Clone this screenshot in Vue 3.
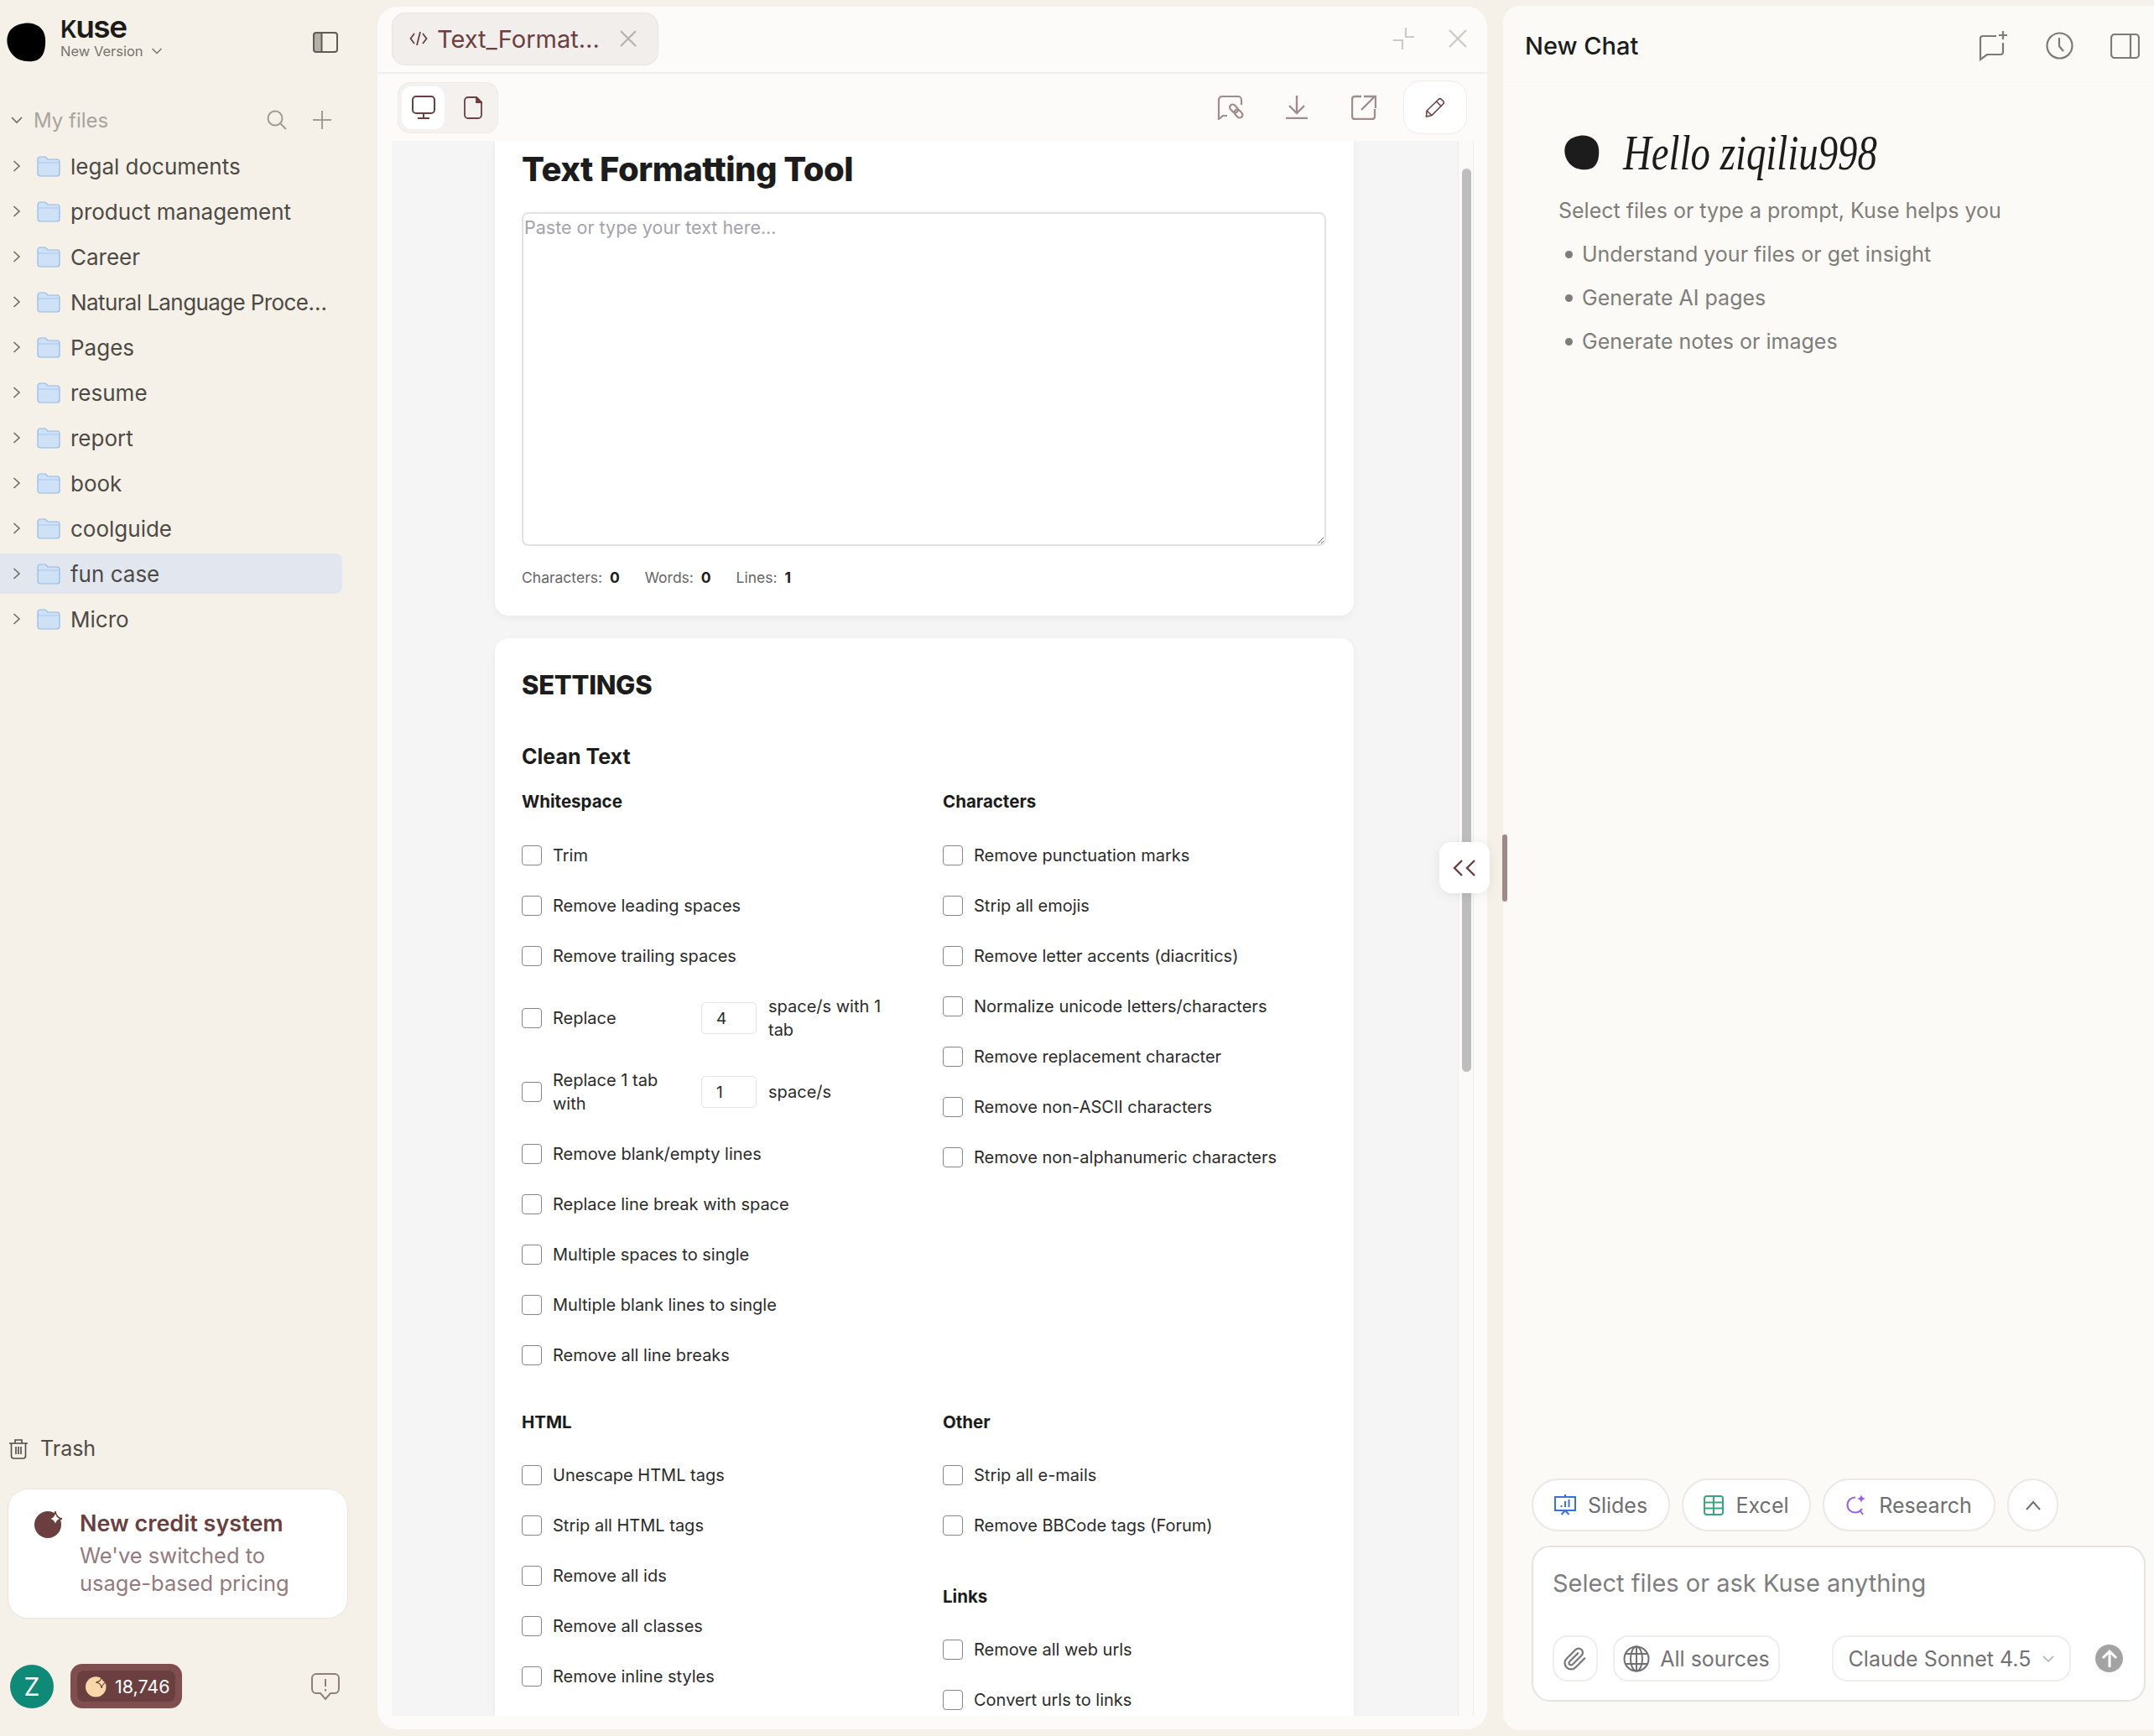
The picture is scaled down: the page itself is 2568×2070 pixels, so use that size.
<template>
  <div class="app">
    <!-- left sidebar -->
    <aside class="sidebar">
      <div class="brand">
        <svg class="blob" width="47" height="47" viewBox="0 0 47 47"><path d="M20 1C31-1 45 4 46 19c1 14-3 26-15 27-9 1-19-1-25-9C0 29-1 20 2 13 5 6 12 2 20 1z" fill="#000" /></svg>
        <div class="brand-text">
          <div class="wordmark"><span class="wordmark-k">K</span>use</div>
          <div class="version">
            New Version
            <svg width="14" height="10" viewBox="0 0 14 10" fill="none" stroke="#77736c" stroke-width="1.5"><path d="M1.500 2l5.500 5.500L12.500 2" /></svg>
          </div>
        </div>
        <svg class="brand-toggle" width="30" height="25" viewBox="0 0 30 25" fill="none">
          <rect x="1" y="1" width="10" height="23" rx="3" fill="#b3b0a8" />
          <rect x="1" y="1" width="28" height="23" rx="3" stroke="#5e5b55" stroke-width="2" />
          <path d="M10.500 1v23" stroke="#5e5b55" stroke-width="2" />
        </svg>
      </div>

      <div class="files-head">
        <svg width="14" height="10" viewBox="0 0 14 10" fill="none" stroke="#6e6a63" stroke-width="1.600"><path d="M1 2l6 6 6-6" /></svg>
        <span class="files-title">My files</span>
        <svg class="files-search" width="24" height="24" viewBox="0 0 24 24" fill="none" stroke="#a09c94" stroke-width="2"><circle cx="10" cy="10" r="8.500" /><path d="M16 16l7 7" /></svg>
        <svg class="files-add" width="24" height="24" viewBox="0 0 24 24" fill="none" stroke="#a09c94" stroke-width="2"><path d="M12 1v22M1 12h22" /></svg>
      </div>

      <div class="tree">
        <div v-for="folder in folders" :key="folder" class="tree-row" :class="{ selected: folder === 'fun case' }">
          <svg width="10" height="16" viewBox="0 0 10 16" fill="none" stroke="#6e6a63" stroke-width="1.600"><path d="M1.500 2l6.500 6-6.500 6" /></svg>
          <svg width="28" height="25" viewBox="0 0 28 25">
            <path d="M1 4a3 3 0 0 1 3-3h6l3 3h11a3 3 0 0 1 3 3v14a3 3 0 0 1-3 3H4a3 3 0 0 1-3-3z" fill="#cfe1f7" stroke="#93b9e6" stroke-width="1.200" />
            <path d="M1 8h26" stroke="#a9c8ec" stroke-width="1" />
          </svg>
          <span class="tree-name" :class="{ clipped: folder.endsWith('…') }">{{ folder }}</span>
        </div>
      </div>

      <div class="trash">
        <svg width="24" height="25" viewBox="0 0 24 25" fill="none" stroke="#4f4b45" stroke-width="1.600"><path d="M1 6h22M8 6V2h8v4M3.500 6v15a3 3 0 0 0 3 3h11a3 3 0 0 0 3-3V6M9 10v9M12 10v9M15 10v9" /></svg>
        Trash
      </div>

      <div class="credit-card">
        <svg class="credit-icon" width="34" height="33" viewBox="0 0 34 33">
          <circle cx="16" cy="17" r="16" fill="#6b3f3f" />
          <path d="M25 1c1 6 3 8 8 9-5 1-7 3-8 9-1-6-3-8-9-9 6-1 8-3 9-9z" fill="#fff" stroke="#6b3f3f" stroke-width="1.500" />
        </svg>
        <div>
          <div class="credit-title">New credit system</div>
          <div class="credit-sub">We've switched to<br />usage-based pricing</div>
        </div>
      </div>

      <div class="account">
        <div class="avatar">Z</div>
        <div class="credits">
          <div class="credits-inner">
            <svg width="26" height="26" viewBox="0 0 34 33">
              <circle cx="16" cy="17" r="16" fill="#f8d7a8" />
              <path d="M25 1c1 6 3 8 8 9-5 1-7 3-8 9-1-6-3-8-9-9 6-1 8-3 9-9z" fill="#f8d7a8" stroke="#6b3f3f" stroke-width="1.500" />
            </svg>
            18,746
          </div>
        </div>
        <svg class="feedback" width="36" height="34" viewBox="0 0 36 34" fill="none" stroke="#8f7f7a" stroke-width="2">
          <path d="M7 2h22a5 5 0 0 1 5 5v13a5 5 0 0 1-5 5h-5l-6 7-6-7H7a5 5 0 0 1-5-5V7a5 5 0 0 1 5-5z" />
          <path d="M18 8v9M18 20v2.500" />
        </svg>
      </div>
    </aside>

    <!-- file preview -->
    <main class="preview">
      <div class="tabbar">
        <div class="tab">
          <svg width="22" height="20" viewBox="0 0 22 20" fill="none" stroke="#6b3f3f" stroke-width="1.800"><path d="M6 4L1.500 10 6 16M16 4l4.500 6L16 16M13 2L9 18" /></svg>
          <span class="tab-name">Text_Format…</span>
          <svg width="22" height="22" viewBox="0 0 22 22" fill="none" stroke="#b8b0ac" stroke-width="2.200"><path d="M2 2l18 18M20 2L2 20" /></svg>
        </div>
        <svg class="tab-min" width="26" height="26" viewBox="0 0 26 26" fill="none" stroke="#cfcac6" stroke-width="2.200"><path d="M15 0v11h10M0 15h11v11" /></svg>
        <svg class="tab-close" width="22" height="22" viewBox="0 0 22 22" fill="none" stroke="#cfcac6" stroke-width="2.400"><path d="M1 1l20 20M21 1L1 21" /></svg>
      </div>

      <div class="toolbar">
        <div class="view-switch">
          <div class="view-btn active">
            <svg width="28" height="28" viewBox="0 0 28 28" fill="none" stroke="#6b3f3f" stroke-width="2"><rect x="1" y="1" width="26" height="20" rx="4" /><path d="M14 21v6M7 27h14" /></svg>
          </div>
          <div class="view-btn">
            <svg width="22" height="27" viewBox="0 0 22 27" fill="none" stroke="#6b3f3f" stroke-width="1.800"><path d="M5 1h10l6 6v15a4 4 0 0 1-4 4H5a4 4 0 0 1-4-4V5a4 4 0 0 1 4-4z" /><path d="M15 1l6 6h-6z" fill="#6b3f3f" /></svg>
          </div>
        </div>
        <svg class="tool first" width="32" height="30" viewBox="0 0 32 30" fill="none" stroke="#a08c8c" stroke-width="2.200">
          <path d="M12 25H7l-5 4V6a4 4 0 0 1 4-4h19a4 4 0 0 1 4 4v6" />
          <rect x="14.500" y="13" width="11" height="7" rx="3.500" transform="rotate(45 20 16.500)" />
          <rect x="20" y="19" width="11" height="7" rx="3.500" transform="rotate(45 25.500 22.500)" />
        </svg>
        <svg class="tool" width="26" height="28" viewBox="0 0 26 28" fill="none" stroke="#a08c8c" stroke-width="2.400">
          <path d="M13 0v20M4 12l9 9 9-9M0 27h26" />
        </svg>
        <svg class="tool tool-share" width="30" height="30" viewBox="0 0 30 30" fill="none" stroke="#a08c8c" stroke-width="2.400">
          <path d="M12 2H4a3 3 0 0 0-3 3v21a3 3 0 0 0 3 3h21a3 3 0 0 0 3-3v-9" />
          <path d="M12 18L28 2M15 2h14v14" />
        </svg>
        <div class="edit-btn">
          <svg width="24" height="24" viewBox="0 0 24 24" fill="none" stroke="#6b3f3f" stroke-width="1.600">
            <path d="M16 2.500a2.500 2.500 0 0 1 3.500 0l2 2a2.500 2.500 0 0 1 0 3.500L8 21.500 1.500 23l.5-7zM13.500 5l5.500 5.500M2 16l6 5.500" />
          </svg>
        </div>
      </div>

      <div class="preview-body">
        <div class="scroll-area">
          <section class="card first-card">
            <h1 class="page-title">Text Formatting Tool</h1>
            <textarea class="input-box" placeholder="Paste or type your text here..."></textarea>
            <div class="stats">
              <span v-for="stat in stats" :key="stat.label">{{ stat.label }}: <b>{{ stat.value }}</b></span>
            </div>
          </section>

          <section class="card settings-card">
            <h2 class="settings-title">SETTINGS</h2>
            <h3 class="clean-title">Clean Text</h3>
            <div class="settings-grid">
              <div class="group">
                <h4>Whitespace</h4>
                <div class="rows">
                  <template v-for="item in whitespace" :key="item.label">
                    <label v-if="!item.value" class="opt"><input type="checkbox" /><span>{{ item.label }}</span></label>
                    <div v-else class="opt opt-input">
                      <input type="checkbox" />
                      <span class="opt-label">{{ item.label }}</span>
                      <input class="num" type="text" :value="item.value" />
                      <span class="opt-after">{{ item.after }}</span>
                    </div>
                  </template>
                </div>
              </div>
              <div class="group">
                <h4>Characters</h4>
                <div class="rows">
                  <label v-for="item in characters" :key="item" class="opt"><input type="checkbox" /><span>{{ item }}</span></label>
                </div>
              </div>
              <div class="group lower">
                <h4>HTML</h4>
                <div class="rows">
                  <label v-for="item in html" :key="item" class="opt"><input type="checkbox" /><span>{{ item }}</span></label>
                </div>
              </div>
              <div>
                <div class="group lower">
                  <h4>Other</h4>
                  <div class="rows">
                    <label v-for="item in other" :key="item" class="opt"><input type="checkbox" /><span>{{ item }}</span></label>
                  </div>
                </div>
                <div class="group lower links-group">
                  <h4>Links</h4>
                  <div class="rows">
                    <label v-for="item in links" :key="item" class="opt"><input type="checkbox" /><span>{{ item }}</span></label>
                  </div>
                </div>
              </div>
            </div>
          </section>
        </div>
        <div class="scroll-track"><div class="scroll-thumb"></div></div>
      </div>
    </main>

    <!-- chat panel -->
    <section class="chat">
      <header class="chat-head">
        <span class="chat-title">New Chat</span>
        <svg class="head-icon" width="36" height="36" viewBox="0 0 36 36" fill="none" stroke="#7d7b77" stroke-width="2.200">
          <path d="M21 6H5a3 3 0 0 0-3 3v25l8-6h16a3 3 0 0 0 3-3V14" />
          <path d="M29 0v10M24 5h10" />
        </svg>
        <svg class="head-icon" width="33" height="33" viewBox="0 0 33 33" fill="none" stroke="#7d7b77" stroke-width="2.200">
          <circle cx="16.500" cy="16.500" r="15" /><path d="M16 7v10l5 6" />
        </svg>
        <svg class="head-icon" width="35" height="30" viewBox="0 0 35 30" fill="none" stroke="#7d7b77" stroke-width="2.200">
          <rect x="1" y="1" width="33" height="28" rx="4" /><path d="M24 1v28" />
        </svg>
      </header>

      <div class="welcome">
        <div class="hello">
          <svg width="42" height="42" viewBox="0 0 47 47"><path d="M20 1C31-1 45 4 46 19c1 14-3 26-15 27-9 1-19-1-25-9C0 29-1 20 2 13 5 6 12 2 20 1z" fill="#1c1c1c" /></svg>
          <span class="hello-text">Hello ziqiliu998</span>
        </div>
        <p class="intro">Select files or type a prompt, Kuse helps you</p>
        <ul class="intro-list">
          <li v-for="line in intro" :key="line">{{ line }}</li>
        </ul>
      </div>

      <div class="chat-bottom">
        <div class="chips">
          <div class="chip chip-slides">
            <svg width="26" height="25" viewBox="0 0 26 25" fill="none" stroke="#3c6fe0" stroke-width="2">
              <path d="M13 0v3M1 3h24v16H1zM8.500 24l4.500-5 4.500 5" />
              <path d="M8.500 15v-2M13 15V8M17.500 15V6" />
            </svg>
            Slides
          </div>
          <div class="chip chip-excel">
            <svg width="24" height="24" viewBox="0 0 24 24" fill="none" stroke="#3ba57f" stroke-width="2">
              <rect x="1" y="1" width="22" height="22" rx="3" /><path d="M1 8.500h22M1 15.500h22M12 1v22" />
            </svg>
            Excel
          </div>
          <div class="chip chip-research">
            <svg width="25" height="25" viewBox="0 0 25 25" fill="none" stroke="#9a62ea" stroke-width="2">
              <path d="M11 3.500C5.500 3.500 1.500 7 1.500 12.500S5.500 21.500 11 21.500c3.500 0 6-1.500 8-4.500M16 18.500l4 5.500" />
              <path d="M18 0c.6 3 1.700 4.300 5 5-3.300.7-4.400 2-5 5-.6-3-1.700-4.300-5-5 3.300-.7 4.400-2 5-5z" fill="#9a62ea" stroke="none" />
            </svg>
            Research
          </div>
          <div class="chip chip-round">
            <svg width="18" height="12" viewBox="0 0 18 12" fill="none" stroke="#6e6e70" stroke-width="2"><path d="M1 11l8-9 8 9" /></svg>
          </div>
        </div>

        <div class="composer">
          <div class="composer-input">Select files or ask Kuse anything</div>
          <div class="composer-row">
            <div class="mini-btn attach">
              <svg width="30" height="32" viewBox="0 0 24 24" fill="none" stroke="#77777a" stroke-width="1.800"><path d="M21.440 11.050l-9.190 9.190a6 6 0 0 1-8.490-8.490l8.570-8.570A4 4 0 1 1 18 8.840l-8.590 8.570a2 2 0 0 1-2.830-2.830l8.490-8.480" /></svg>
            </div>
            <div class="mini-btn sources">
              <svg width="32" height="32" viewBox="0 0 32 32" fill="none" stroke="#6f6f72" stroke-width="2"><circle cx="16" cy="16" r="14.500" /><ellipse cx="16" cy="16" rx="7" ry="14.500" /><path d="M3 10h26M3 22h26M16 1.500v29" /></svg>
              All sources
            </div>
            <div class="mini-btn model">
              Claude Sonnet 4.5
              <svg width="14" height="10" viewBox="0 0 14 10" fill="none" stroke="#aaa" stroke-width="1.500"><path d="M1 2l6 6 6-6" /></svg>
            </div>
            <div class="send">
              <svg width="20" height="22" viewBox="0 0 20 22" fill="none" stroke="#fff" stroke-width="3"><path d="M10 21V3M2 10l8-8 8 8" /></svg>
            </div>
          </div>
        </div>
      </div>
    </section>

    <button class="collapse">
      <svg width="28" height="20" viewBox="0 0 28 20" fill="none" stroke="#6b3f3f" stroke-width="2.400"><path d="M11 1L2 10l9 9M26 1l-9 9 9 9" /></svg>
    </button>
    <div class="resize-handle"></div>
  </div>
</template>

<script setup>
const folders = [
  'legal documents',
  'product management',
  'Career',
  'Natural Language Proce…',
  'Pages',
  'resume',
  'report',
  'book',
  'coolguide',
  'fun case',
  'Micro',
];

const stats = [
  { label: 'Characters', value: 0 },
  { label: 'Words', value: 0 },
  { label: 'Lines', value: 1 },
];

const whitespace = [
  { label: 'Trim' },
  { label: 'Remove leading spaces' },
  { label: 'Remove trailing spaces' },
  { label: 'Replace', value: '4', after: 'space/s with 1 tab' },
  { label: 'Replace 1 tab with', value: '1', after: 'space/s' },
  { label: 'Remove blank/empty lines' },
  { label: 'Replace line break with space' },
  { label: 'Multiple spaces to single' },
  { label: 'Multiple blank lines to single' },
  { label: 'Remove all line breaks' },
];

const characters = [
  'Remove punctuation marks',
  'Strip all emojis',
  'Remove letter accents (diacritics)',
  'Normalize unicode letters/characters',
  'Remove replacement character',
  'Remove non-ASCII characters',
  'Remove non-alphanumeric characters',
];

const html = ['Unescape HTML tags', 'Strip all HTML tags', 'Remove all ids', 'Remove all classes', 'Remove inline styles'];
const other = ['Strip all e-mails', 'Remove BBCode tags (Forum)'];
const links = ['Remove all web urls', 'Convert urls to links'];
const intro = ['Understand your files or get insight', 'Generate AI pages', 'Generate notes or images'];
</script>

<style>
body {
  background: #f5f1e9;
}
</style>

<style scoped>
.app {
  position: relative;
  display: flex;
  width: 2568px;
  height: 2070px;
  overflow: hidden;
  background: #f5f1e9;
  font-family: Inter, "Liberation Sans", sans-serif;
  color: #1c1c1c;
}

/* sidebar */
.sidebar {
  flex: 0 0 450px;
  display: flex;
  flex-direction: column;
}

.brand {
  display: flex;
  align-items: flex-start;
  height: 118px;
  padding: 18px 0 0 8px;
  box-sizing: border-box;
}

.blob {
  margin-top: 9px;
  margin-right: 17px;
}

.wordmark {
  font-size: 37px;
  font-weight: 600;
  line-height: 28px;
  letter-spacing: -1.500px;
  color: #1d1b18;
}

.wordmark-k {
  font-size: 28px;
}

.version {
  display: flex;
  align-items: center;
  gap: 9px;
  margin-top: 2px;
  font-size: 16.500px;
  line-height: 20px;
  color: #77736c;
}

.brand-toggle {
  margin: 20px 47px 0 auto;
}

.files-head {
  display: flex;
  align-items: center;
  height: 50px;
  padding-left: 13px;
}

.files-title {
  margin-left: 13px;
  font-size: 24px;
  color: #a8a49c;
}

.files-search {
  margin-left: auto;
}

.files-add {
  margin: 0 54px 0 30px;
}

.tree {
  display: flex;
  flex-direction: column;
  width: 408px;
  margin-top: 6px;
  gap: 6px;
}

.tree-row {
  display: flex;
  align-items: center;
  height: 48px;
  padding-left: 15px;
  gap: 19px;
  border-radius: 0 8px 8px 0;
}

.tree-row.selected {
  background: #e2e7ef;
}

.tree-name {
  margin-left: -7px;
  font-size: 26px;
  color: #4d4a45;
  white-space: nowrap;
}

.tree-name.clipped {
  letter-spacing: -0.600px;
}

.trash {
  display: flex;
  align-items: center;
  gap: 14px;
  margin-top: auto;
  padding-left: 10px;
  font-size: 25px;
  color: #4f4b45;
}

.credit-card {
  display: flex;
  gap: 20px;
  height: 155px;
  margin: 33px 35px 0 9px;
  padding: 25px 0 0 31px;
  box-sizing: border-box;
  background: #fff;
  border: 1px solid #ece6da;
  border-radius: 24px;
}

.credit-title {
  font-size: 27px;
  font-weight: 600;
  line-height: 32px;
  color: #6b3f3f;
}

.credit-sub {
  margin-top: 5px;
  font-size: 25.500px;
  line-height: 33px;
  color: #947a7c;
}

.account {
  display: flex;
  align-items: center;
  height: 53px;
  margin: 54px 0 33px 12px;
}

.avatar {
  display: flex;
  align-items: center;
  justify-content: center;
  width: 52px;
  height: 52px;
  border-radius: 50%;
  background: #0f8a78;
  font-size: 30px;
  color: #fff;
}

.credits {
  margin-left: 20px;
  padding: 8px;
  background: #7f4f50;
  border-radius: 14px;
}

.credits-inner {
  display: flex;
  align-items: center;
  gap: 9px;
  width: 117px;
  height: 37px;
  padding-left: 10px;
  box-sizing: border-box;
  background: #6b3f3f;
  border-radius: 8px;
  font-size: 21.500px;
  color: #fff;
  white-space: nowrap;
}

.feedback {
  margin-left: 153px;
}

/* preview */
.preview {
  flex: 0 0 1323px;
  display: flex;
  flex-direction: column;
  margin: 8px 0;
  padding-bottom: 16px;
  box-sizing: border-box;
  background: #fdfbf9;
  border-radius: 24px;
}

.tabbar {
  display: flex;
  align-items: center;
  flex: 0 0 80px;
  padding: 0 24px 2px 17px;
  box-sizing: border-box;
  border-bottom: 2px solid #f1eeeb;
}

.tab {
  display: flex;
  align-items: center;
  width: 318px;
  height: 63px;
  padding-left: 20px;
  box-sizing: border-box;
  background: #f1eeeb;
  border: 1px solid #e8e4e1;
  border-radius: 16px;
}

.tab-name {
  margin: 0 24px 0 11px;
  width: 193px;
  font-size: 29px;
  color: #6b3f3f;
  white-space: nowrap;
}

.tab-min {
  margin-left: auto;
}

.tab-close {
  margin-left: 40px;
}

.toolbar {
  display: flex;
  align-items: center;
  flex: 0 0 80px;
  padding: 0 24px 0 24px;
  box-sizing: border-box;
}

.view-switch {
  display: flex;
  gap: 8px;
  align-items: center;
  width: 120px;
  height: 61px;
  padding: 4px;
  box-sizing: border-box;
  background: #f4f1ee;
  border: 1px solid #eeebe8;
  border-radius: 14px;
}

.view-btn {
  display: flex;
  align-items: center;
  justify-content: center;
  width: 52px;
  height: 51px;
  border-radius: 12px;
}

.view-btn.active {
  background: #fff;
}

.tool {
  margin-left: 50px;
}

.tool.first {
  margin-left: auto;
}

.tool.tool-share {
  margin-left: 52px;
}

.edit-btn {
  display: flex;
  align-items: center;
  justify-content: center;
  width: 74px;
  height: 62px;
  margin-left: 32px;
  background: #fff;
  border: 1px solid #f0ece8;
  border-radius: 20px;
}

.preview-body {
  flex: 1;
  display: flex;
  min-height: 0;
  margin: 0 16px 0 17px;
}

.scroll-area {
  width: 1271px;
  padding-left: 123px;
  box-sizing: border-box;
  overflow: hidden;
  background: #f5f5f5;
}

.scroll-track {
  width: 19px;
  background: #fbfaf8;
  border-left: 1px solid #ebebeb;
  border-right: 1px solid #ebebeb;
  box-sizing: border-box;
}

.scroll-thumb {
  width: 11px;
  height: 1077px;
  margin: 33px 0 0 4px;
  background: #bdbdbd;
  border-radius: 6px;
}

.card {
  width: 1024px;
  padding: 0 33px 0 32px;
  box-sizing: border-box;
  background: #fff;
  border-radius: 16px;
  box-shadow: 0 3px 10px rgba(0, 0, 0, 0.05);
}

.first-card {
  padding-top: 8px;
  padding-bottom: 33px;
  border-radius: 0 0 16px 16px;
}

.page-title {
  margin: 0 0 25px;
  font-size: 40px;
  font-weight: 800;
  line-height: 52px;
  letter-spacing: -0.500px;
}

.input-box {
  display: block;
  width: 100%;
  height: 398px;
  margin: 0;
  padding: 2px 1px 0;
  box-sizing: border-box;
  background: #fff;
  border: 2px solid #e2e2e2;
  border-radius: 8px;
  outline: none;
  font-family: inherit;
  font-size: 21.500px;
  line-height: 28px;
}

.input-box::placeholder {
  color: #a3a3ad;
}

.stats {
  display: flex;
  gap: 30px;
  margin-top: 26px;
  font-size: 17.500px;
  line-height: 24px;
  color: #666;
}

.stats b {
  margin-left: 4px;
  font-weight: 700;
  color: #1c1c1c;
}

.settings-card {
  margin-top: 27px;
  padding-top: 35px;
  padding-bottom: 40px;
}

.settings-title {
  margin: 0;
  font-size: 31px;
  font-weight: 800;
  line-height: 42px;
  letter-spacing: -0.300px;
}

.clean-title {
  margin: 47px 0 0;
  font-size: 25px;
  font-weight: 700;
  line-height: 34px;
}

.settings-grid {
  display: grid;
  grid-template-columns: 458px 458px;
  column-gap: 44px;
  row-gap: 52px;
  margin-top: 23px;
}

h4 {
  margin: 0 0 36px;
  font-size: 20.500px;
  font-weight: 700;
  line-height: 28px;
}

.lower h4 {
  margin-bottom: 35px;
}

.rows {
  display: flex;
  flex-direction: column;
  gap: 32px;
}

.links-group {
  margin-top: 57px;
}

.opt {
  display: flex;
  align-items: center;
  gap: 13px;
  font-size: 20px;
  line-height: 28px;
  color: #2b2b2b;
}

.opt input[type='checkbox'] {
  flex: none;
  width: 24px;
  height: 24px;
  margin: 0;
  appearance: none;
  background: #fff;
  border: 1.500px solid #858585;
  border-radius: 4px;
}

.opt-label {
  width: 164px;
}

.num {
  flex: none;
  width: 66px;
  height: 38px;
  padding: 0 0 0 17px;
  box-sizing: border-box;
  border: 1px solid #e4e4e4;
  border-radius: 5px;
  outline: none;
  font-family: inherit;
  font-size: 19px;
  color: #2b2b2b;
}

.opt-after {
  width: 140px;
  margin-left: 1px;
}

/* chat */
.chat {
  flex: 1;
  display: flex;
  flex-direction: column;
  margin: 7px 0 7px 19px;
  background: #fbfaf6;
  border-radius: 20px 0 0 20px;
}

.chat-head {
  display: flex;
  align-items: center;
  flex: 0 0 96px;
  padding: 0 17px 0 26px;
  box-sizing: border-box;
  border-bottom: 1px solid #f6f4ef;
}

.chat-title {
  margin-right: auto;
  font-size: 29px;
  font-weight: 500;
  color: #1c1c1c;
}

.head-icon {
  margin-left: 44px;
}

.welcome {
  padding: 49px 0 0 66px;
}

.hello {
  display: flex;
  align-items: center;
  gap: 28px;
  height: 60px;
  margin-left: 7px;
}

.hello-text {
  font-family: "Liberation Serif", serif;
  font-size: 60px;
  font-style: italic;
  line-height: 60px;
  color: #1c1c1c;
  white-space: nowrap;
  transform: scaleX(0.78);
  transform-origin: left center;
}

.intro {
  margin: 13px 0 0;
  font-size: 25px;
  line-height: 52px;
  color: #7f7d79;
}

.intro-list {
  margin: 0;
  padding: 0 0 0 28px;
  list-style: none;
  font-size: 25px;
  line-height: 52px;
  color: #7f7d79;
}

.intro-list li {
  position: relative;
}

.intro-list li::before {
  content: "";
  position: absolute;
  left: -20px;
  top: 22px;
  width: 9px;
  height: 9px;
  border-radius: 50%;
  background: #7f7d79;
}

.chat-bottom {
  margin-top: auto;
  padding: 0 10px 34px 34px;
}

.chips {
  display: flex;
  gap: 14px;
}

.chip {
  display: flex;
  align-items: center;
  justify-content: center;
  gap: 14px;
  height: 63px;
  background: #fff;
  border: 2px solid #ebe9e5;
  border-radius: 32px;
  box-sizing: border-box;
  font-size: 25px;
  color: #6e6e70;
}

.chip-slides {
  width: 165px;
}

.chip-excel {
  width: 154px;
}

.chip-research {
  width: 206px;
}

.chip-round {
  width: 61px;
}

.composer {
  display: flex;
  flex-direction: column;
  height: 186px;
  margin-top: 17px;
  padding: 0 23px;
  box-sizing: border-box;
  background: #fff;
  border: 2px solid #e6e4e0;
  border-radius: 22px;
}

.composer-input {
  margin-top: 23px;
  font-size: 29px;
  line-height: 40px;
  color: #7e7e80;
}

.composer-row {
  display: flex;
  align-items: center;
  margin-top: auto;
  margin-bottom: 22px;
}

.mini-btn {
  display: flex;
  align-items: center;
  justify-content: center;
  height: 55px;
  background: #fff;
  border: 2px solid #f0eeea;
  border-radius: 18px;
  box-sizing: border-box;
  font-size: 25px;
  color: #727274;
  white-space: nowrap;
}

.attach {
  width: 54px;
}

.sources {
  width: 199px;
  margin-left: 18px;
  gap: 12px;
}

.model {
  width: 285px;
  margin-left: 62px;
  gap: 14px;
}

.send {
  display: flex;
  align-items: center;
  justify-content: center;
  width: 33px;
  height: 33px;
  margin-left: 29px;
  border-radius: 50%;
  background: #a3a3a3;
}

/* floating controls between the panels */
.collapse {
  position: absolute;
  left: 1716px;
  top: 1004px;
  display: flex;
  align-items: center;
  justify-content: center;
  width: 60px;
  height: 61px;
  padding: 0;
  background: #fff;
  border: none;
  border-radius: 14px;
  box-shadow: 0 2px 14px rgba(0, 0, 0, 0.08);
}

.resize-handle {
  position: absolute;
  left: 1791px;
  top: 995px;
  width: 6px;
  height: 80px;
  background: #a08788;
  border-radius: 3px;
}
</style>
